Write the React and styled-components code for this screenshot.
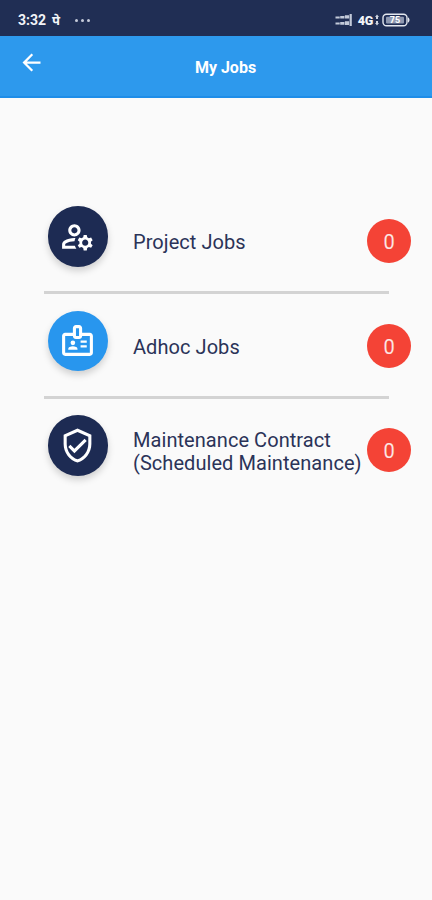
import React from 'react'
import styled, { createGlobalStyle } from 'styled-components'
import {
  MdArrowBack,
  MdOutlineBadge,
  MdOutlineManageAccounts,
  MdOutlineVerifiedUser,
} from 'react-icons/md'

const GlobalStyle = createGlobalStyle`
  * {
    box-sizing: border-box;
  }
  body {
    margin: 0;
    background-color: #FAFAFA;
    font-family: Roboto, "Noto Sans", sans-serif;
  }
`

const Screen = styled.div`
  height: 900px;
  overflow: hidden;
  background-color: #FAFAFA;
`

const StatusBar = styled.div`
  display: flex;
  justify-content: space-between;
  height: 36px;
  padding: 4px 21px 0 18px;
  background-color: #202E54;
  color: #F2F4F8;
`

const StatusGroup = styled.div`
  display: flex;
  align-items: center;
`

const Clock = styled.span`
  width: 34px;
  font-size: 14px;
  font-weight: 700;
`

const PayLabel = styled.span`
  width: 22px;
  font-size: 13px;
  font-weight: 700;
`

const Dots = styled.span`
  display: flex;
  gap: 3px;
  padding-left: 1px;
`

const Dot = styled.span`
  width: 3px;
  height: 3px;
  border-radius: 50%;
  background-color: #C5CBDA;
`

const Network = styled.span`
  margin: 0 1px 0 5px;
  font-size: 12.5px;
  font-weight: 900;
  letter-spacing: -0.2px;
`

const AppBar = styled.div`
  display: grid;
  grid-template-columns: 63px 1fr 44px;
  height: 62px;
  background-color: #2D99ED;
  border-bottom: 2px solid #1E8DE8;
  color: #fff;
`

const BackButton = styled.button`
  display: flex;
  justify-content: center;
  align-items: flex-start;
  padding: 13px 0 0;
  border: 0;
  background: none;
  color: inherit;
`

const Title = styled.div`
  line-height: 63px;
  text-align: center;
  font-size: 16px;
  font-weight: 700;
`

const JobList = styled.div`
  padding: 100px 21px 0 44px;
`

const JobRow = styled.div`
  display: flex;
  align-items: flex-start;
  height: 93px;
  padding-left: 3.5px;
`

const IconCircle = styled.div`
  display: flex;
  align-items: center;
  justify-content: center;
  flex: none;
  width: 60.5px;
  height: 60.5px;
  margin-top: 8px;
  border-radius: 50%;
  background-color: ${props => props.$color};
  box-shadow: 0 4px 7px rgba(0, 0, 0, 0.17);
  color: #fff;
`

const JobName = styled.div`
  display: flex;
  align-items: center;
  flex: 1;
  min-width: 0;
  height: 72px;
  margin-top: 9px;
  padding-left: 25px;
  color: #2B3358;
  font-size: 20px;
  line-height: 23.4px;
  letter-spacing: 0.06px;
  white-space: pre;
`

const Count = styled.div`
  flex: none;
  width: 44px;
  height: 44px;
  margin-top: 21px;
  border-radius: 50%;
  background-color: #F44336;
  color: #FCE4E2;
  font-size: 20px;
  line-height: 46px;
  text-align: center;
`

const Divider = styled.div`
  height: 3px;
  margin: 0 22px 8.5px 0;
  background-color: #D3D3D3;
`

const jobs = [
  { name: 'Project Jobs', icon: MdOutlineManageAccounts, color: '#1D2B53', count: 0 },
  { name: 'Adhoc Jobs', icon: MdOutlineBadge, color: '#2896EE', count: 0 },
  { name: 'Maintenance Contract\n(Scheduled Maintenance)', icon: MdOutlineVerifiedUser, color: '#1D2B53', count: 0 },
]

const SignalIcon = () => (
  <svg width="18" height="14" viewBox="0 0 18 14" fill="#C3CAD9">
    <path d="M0.5 3.5h4.2v2H0.5zM5.2 3h4.2v2.5H5.2zM9.9 2.2h4.2v3.3H9.9zM14.6 1h2.2v5h-2.2z" />
    <path d="M0.5 9.5h4.2v2H0.5zM5.2 9h4.2v2.8H5.2zM9.9 8.2h4.2V12H9.9zM14.6 6h2.2v7h-2.2z" />
  </svg>
)

const DataArrows = () => (
  <svg width="8" height="12" viewBox="0 0 8 12" fill="#CDD3E0">
    <path d="M3 0.5l2 2.5H4v2H2V3H1zM3 11.5L1 9h1V7h2v2h1z" />
  </svg>
)

const BatteryIcon = () => (
  <svg width="29" height="14" viewBox="0 0 29 14">
    <rect x="1" y="1.3" width="24" height="11.4" rx="3.5" fill="none" stroke="#E3E7EF" strokeWidth="1.4" />
    <path d="M26 4.5c2 .5 2 4.5 0 5z" fill="#E3E7EF" />
    <rect x="4" y="3.8" width="18" height="6.6" rx="1" fill="#8E98B0" />
    <text x="13" y="10.2" textAnchor="middle" fontSize="9" fontWeight="700" fill="#fff">75</text>
  </svg>
)

export default function App() {
  return (
    <Screen>
      <GlobalStyle />
      <StatusBar>
        <StatusGroup>
          <Clock>3:32</Clock>
          <PayLabel>पे</PayLabel>
          <Dots>
            <Dot />
            <Dot />
            <Dot />
          </Dots>
        </StatusGroup>
        <StatusGroup>
          <SignalIcon />
          <Network>4G</Network>
          <DataArrows />
          <BatteryIcon />
        </StatusGroup>
      </StatusBar>
      <AppBar>
        <BackButton aria-label="Back">
          <MdArrowBack size={27} />
        </BackButton>
        <Title>My Jobs</Title>
      </AppBar>
      <JobList>
        {jobs.map(({ name, icon: Icon, color, count }, i) => (
          <React.Fragment key={name}>
            <JobRow>
              <IconCircle $color={color}>
                <Icon size={37} />
              </IconCircle>
              <JobName>{name}</JobName>
              <Count>{count}</Count>
            </JobRow>
            {i < jobs.length - 1 && <Divider />}
          </React.Fragment>
        ))}
      </JobList>
    </Screen>
  )
}
